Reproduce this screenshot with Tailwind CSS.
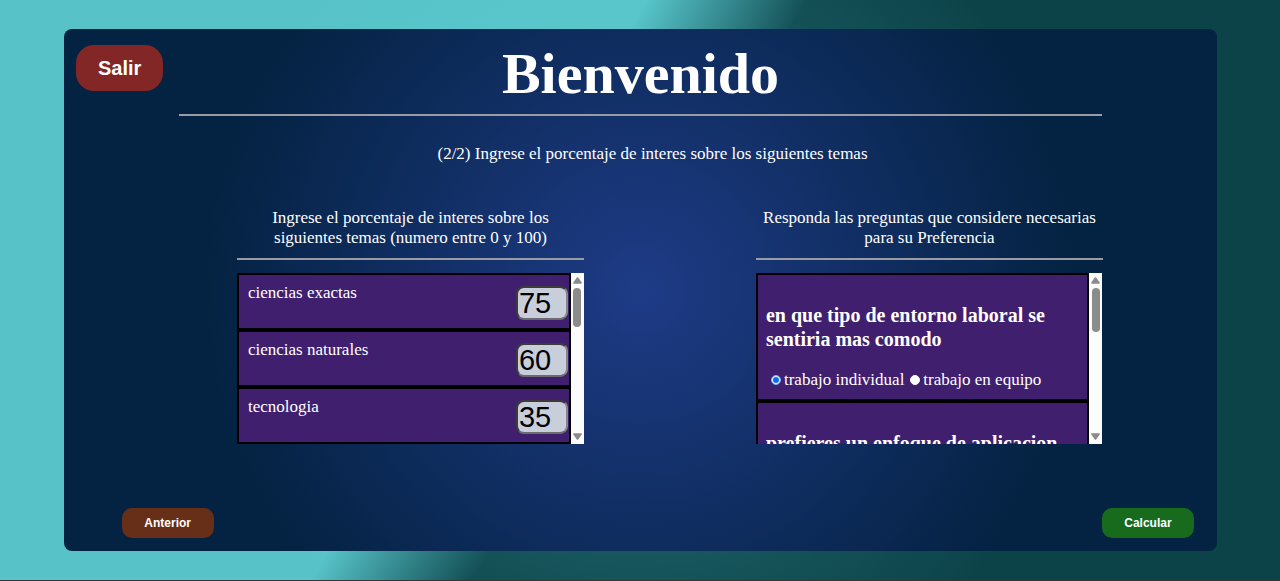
<!DOCTYPE html>
<html lang="es">
<head>
<meta charset="utf-8">
<meta name="viewport" content="width=device-width, initial-scale=1">
<title>Bienvenido</title>
<script src="https://cdn.jsdelivr.net/npm/@tailwindcss/browser@4"></script>
</head>
<body class="flex min-h-screen flex-col border-b border-[#343638] bg-[radial-gradient(circle_at_50%_50%,#60dce450_0,#60dce400_440px),linear-gradient(120deg,#57c3c8_40%,#0c4349_50%)] py-[29px] pr-[63px] pl-16 font-['Liberation_Serif',serif] text-[17px] leading-5 text-white">
<main class="flex grow flex-col rounded-lg bg-[radial-gradient(circle_at_50%_50%,#1e3b87_0,#042241_440px)]">
  <header class="relative">
    <button type="button" class="absolute left-3 top-4 h-[46px] rounded-[18px] bg-[#822626] px-[22px] font-['Liberation_Sans',sans-serif] text-xl font-bold">Salir</button>
    <h1 class="pt-3 text-center text-[58px] leading-[66px] font-bold">Bienvenido</h1>
    <hr class="mx-[10%] mt-[7px] border-0 border-t-2 border-[#989ca4]">
  </header>
  <p class="mt-7 pl-6 text-center">(2/2) Ingrese el porcentaje de interes sobre los siguientes temas</p>
  <div class="mt-11 ml-[15%] mr-[114px] grid grid-cols-2 gap-x-[172px]">
    <section>
      <h2 class="px-6 text-center">Ingrese el porcentaje de interes sobre los siguientes temas (numero entre 0 y 100)</h2>
      <hr class="mt-[10px] border-0 border-t-2 border-[#989ca4]">
      <div class="mt-[13px] flex h-[171px] overflow-hidden">
        <ul class="grow">
          <li class="flex h-[57px] justify-between border-2 border-black bg-[#40206e] pl-[9px]"><label for="exactas" class="pt-2">ciencias exactas</label><input id="exactas" type="text" inputmode="numeric" value="75" class="mt-[11px] mr-px h-[34px] w-[52px] rounded-lg border-2 border-t-[#3c3c3c] border-l-[#3c3c3c] border-r-[#85858d] border-b-[#6b6b70] bg-[#c9cedb] pl-px font-['Liberation_Sans',sans-serif] text-[29px] leading-7 text-black"></li>
          <li class="flex h-[57px] justify-between border-2 border-black bg-[#40206e] pl-[9px]"><label for="naturales" class="pt-2">ciencias naturales</label><input id="naturales" type="text" inputmode="numeric" value="60" class="mt-[11px] mr-px h-[34px] w-[52px] rounded-lg border-2 border-t-[#3c3c3c] border-l-[#3c3c3c] border-r-[#85858d] border-b-[#6b6b70] bg-[#c9cedb] pl-px font-['Liberation_Sans',sans-serif] text-[29px] leading-7 text-black"></li>
          <li class="flex h-[57px] justify-between border-2 border-black bg-[#40206e] pl-[9px]"><label for="tecnologia" class="pt-2">tecnologia</label><input id="tecnologia" type="text" inputmode="numeric" value="35" class="mt-[11px] mr-px h-[34px] w-[52px] rounded-lg border-2 border-t-[#3c3c3c] border-l-[#3c3c3c] border-r-[#85858d] border-b-[#6b6b70] bg-[#c9cedb] pl-px font-['Liberation_Sans',sans-serif] text-[29px] leading-7 text-black"></li>
        </ul>
        <div class="flex w-[13px] shrink-0 flex-col items-center bg-[#fcfcfc] py-1" aria-hidden="true">
          <svg class="h-[7px] w-[9px] fill-[#8b8b8b]" viewBox="0 0 9 7"><path d="M3.8.6Q4.5-.2 5.2.6L8.7 5.4Q9.2 6.7 8 6.7H1Q-.2 6.7.3 5.4Z"/></svg>
          <div class="mt-1 h-[39px] w-2 rounded-full bg-[#8b8b8b]"></div>
          <svg class="mt-auto h-[7px] w-[9px] rotate-180 fill-[#8b8b8b]" viewBox="0 0 9 7"><path d="M3.8.6Q4.5-.2 5.2.6L8.7 5.4Q9.2 6.7 8 6.7H1Q-.2 6.7.3 5.4Z"/></svg>
        </div>
      </div>
    </section>
    <section>
      <h2 class="text-center">Responda las preguntas que considere necesarias para su Preferencia</h2>
      <hr class="mt-[10px] border-0 border-t-2 border-[#989ca4]">
      <div class="mt-[13px] mr-px flex h-[171px] overflow-hidden">
        <div class="grow">
          <fieldset class="h-32 border-2 border-black bg-[#40206e] px-2">
            <h3 class="pt-7 text-xl leading-6 font-bold">en que tipo de entorno laboral se sentiria mas comodo</h3>
            <div class="mt-[19px] flex gap-[6px] pl-[5px]">
              <label class="flex items-center gap-[3px]"><input type="radio" name="entorno" checked class="size-[10px] appearance-none rounded-full border border-white bg-white checked:border-[#8dbcfa] checked:bg-[#0a6cf0] checked:shadow-[inset_0_0_0_1px_white]">trabajo individual</label>
              <label class="flex items-center gap-[3px]"><input type="radio" name="entorno" class="size-[10px] appearance-none rounded-full border border-white bg-white">trabajo en equipo</label>
            </div>
          </fieldset>
          <fieldset class="h-32 border-2 border-black bg-[#40206e] px-2">
            <h3 class="pt-7 text-xl leading-6 font-bold">prefieres un enfoque de aplicacion</h3>
          </fieldset>
        </div>
        <div class="flex w-[13px] shrink-0 flex-col items-center bg-[#fcfcfc] py-1" aria-hidden="true">
          <svg class="h-[7px] w-[9px] fill-[#8b8b8b]" viewBox="0 0 9 7"><path d="M3.8.6Q4.5-.2 5.2.6L8.7 5.4Q9.2 6.7 8 6.7H1Q-.2 6.7.3 5.4Z"/></svg>
          <div class="mt-1 h-11 w-2 rounded-full bg-[#8b8b8b]"></div>
          <svg class="mt-auto h-[7px] w-[9px] rotate-180 fill-[#8b8b8b]" viewBox="0 0 9 7"><path d="M3.8.6Q4.5-.2 5.2.6L8.7 5.4Q9.2 6.7 8 6.7H1Q-.2 6.7.3 5.4Z"/></svg>
        </div>
      </div>
    </section>
  </div>
  <footer class="mt-auto mb-[13px] ml-[5%] mr-[2%] flex justify-between font-['Liberation_Sans',sans-serif] text-xs font-bold">
    <button type="button" class="h-[30px] w-[92px] rounded-[10px] bg-[#672e18]">Anterior</button>
    <button type="button" class="h-[30px] w-[92px] rounded-[10px] bg-[#186a1c]">Calcular</button>
  </footer>
</main>
</body>
</html>
